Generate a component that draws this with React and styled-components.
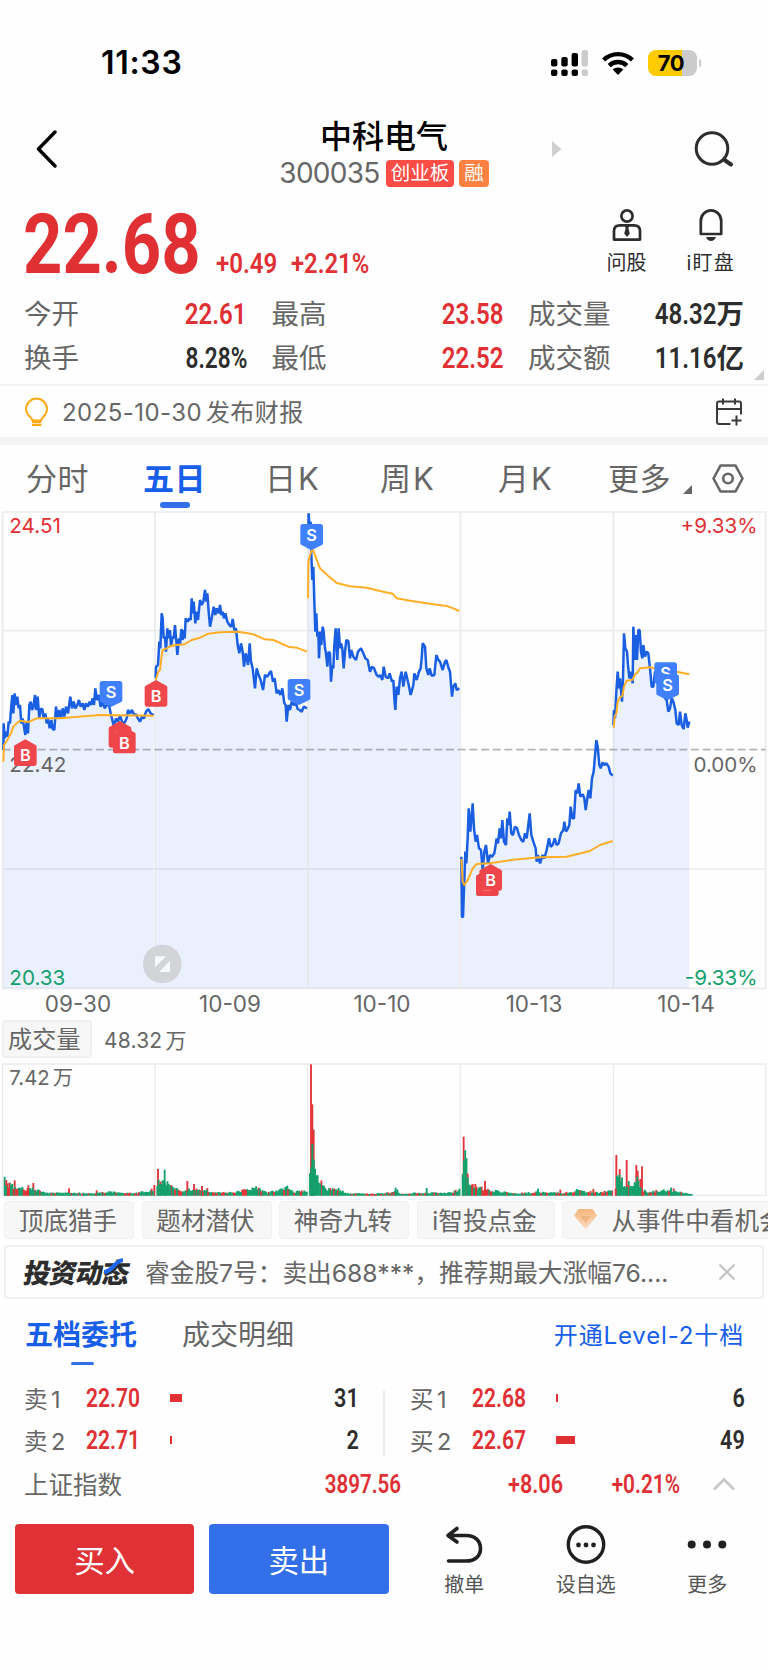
import React from "react";
import styled, { createGlobalStyle } from "styled-components";

const GlobalStyle = createGlobalStyle`
  * {
    box-sizing: border-box;
  }
  body {
    margin: 0;
    background: #fefefe;
  }
`;

const red = "#e03034";
const green = "#14a06c";
const blue = "#175ee9";
const grey = "#666";
const dark = "#2d2d2d";

const Screen = styled.div`
  width: 768px;
  height: 1670px;
  overflow: hidden;
  background: #fefefe;
  color: ${dark};
  font-family: "Inter", "Noto Sans CJK SC", sans-serif;
  white-space: nowrap;
`;

// Condensed figures for every price and amount
const Num = styled.span`
  display: inline-block;
  font-family: "Roboto", sans-serif;
  font-size: ${(p) => p.$size || 29}px;
  font-weight: ${(p) => p.$weight || 600};
  line-height: 1;
  color: ${(p) => p.$color || red};
  transform: scaleX(${(p) => p.$scale || 0.83});
  transform-origin: ${(p) => p.$origin || "right"} center;
`;

/* Status bar */

const StatusBar = styled.div`
  display: flex;
  align-items: center;
  height: 100px;
  padding: 25px 71px 0 101px;
`;

const Clock = styled.span`
  flex: 1;
  font-size: 32px;
  font-weight: 600;
  letter-spacing: 0.7px;
  color: #000;
`;

const Battery = styled.div`
  display: flex;
  align-items: center;
  justify-content: center;
  position: relative;
  width: 49px;
  height: 26px;
  margin-left: 14px;
  padding-right: 3px;
  border-radius: 8px;
  background: linear-gradient(90deg, #fecb00 70%, #cbcbcb 70%);
  font-size: 22px;
  font-weight: 700;
  letter-spacing: -0.5px;
  color: #000;
  &::after {
    content: "";
    position: absolute;
    right: -4px;
    top: 9px;
    width: 2px;
    height: 8px;
    border-radius: 0 3px 3px 0;
    background: #cbcbcb;
  }
`;

/* Header */

const Header = styled.header`
  display: grid;
  grid-template-columns: 220px 1fr 220px;
  align-items: center;
  height: 98px;
`;

const BackSlot = styled.div`
  padding-left: 35px;
  line-height: 0;
`;

const RightSlot = styled.div`
  display: flex;
  align-items: center;
  justify-content: space-between;
  padding: 0 34px 0 4px;
`;

const TitleBlock = styled.div`
  display: flex;
  flex-direction: column;
  align-items: center;
  gap: 1px;
  padding-top: 7px;
`;

const Title = styled.h1`
  margin: 0;
  font-size: 32px;
  font-weight: 500;
  line-height: 40px;
  color: #000;
`;

const CodeLine = styled.div`
  display: flex;
  align-items: center;
  gap: 5px;
  height: 30px;
  font-size: 28px;
  letter-spacing: -0.7px;
  color: ${grey};
`;

const Badge = styled.span`
  height: 27px;
  padding: 0 5px;
  border-radius: 4px;
  background: ${(p) => p.$bg};
  color: #fff;
  font-size: 19.5px;
  line-height: 26px;
  letter-spacing: 0;
  &:first-of-type {
    margin-left: 1px;
  }
`;

/* Quote */

const Quote = styled.section`
  position: relative;
  height: 186px;
  padding: 5px 24px 0;
`;

const PriceRow = styled.div`
  display: flex;
  align-items: baseline;
  height: 89px;
`;

const Price = styled.div`
  width: 193px;
  margin-left: -1px;
`;

const Change = styled.div`
  width: ${(p) => p.$w}px;
`;

const QuickActions = styled.div`
  display: flex;
  align-self: flex-start;
  gap: 40px;
  margin-left: auto;
  padding: 5px 9px 0 0;
`;

const QuickAction = styled.div`
  display: flex;
  flex-direction: column;
  align-items: center;
  gap: 8px;
  font-size: 20px;
  line-height: 26px;
  letter-spacing: ${(p) => (p.$wide ? 1.2 : 0)}px;
`;

const Stats = styled.div`
  display: grid;
  grid-template-columns: 223px 232px 216px;
  column-gap: 24.5px;
  grid-auto-rows: 44px;
`;

const Stat = styled.div`
  display: flex;
  align-items: center;
  justify-content: space-between;
  font-size: 27.5px;
  line-height: 44px;
  color: ${grey};
`;

const Unit = styled.span`
  color: ${dark};
  font-weight: 600;
`;

const StatValue = styled.span`
  display: flex;
  align-items: center;
`;

const Corner = styled.i`
  position: ${(p) => (p.$pinned ? "absolute" : "static")};
  right: 4px;
  bottom: 4px;
  justify-self: start;
  margin-top: ${(p) => (p.$pinned ? 0 : 20)}px;
  border-left: ${(p) => p.$size}px solid transparent;
  border-bottom: ${(p) => p.$size}px solid ${(p) => p.$color};
`;

const Notice = styled.div`
  display: flex;
  align-items: center;
  gap: 12px;
  height: 61px;
  padding: 0 25px 0 24px;
  border-top: 2px solid #f5f5f5;
  border-bottom: 8px solid #f4f4f4;
  color: ${grey};
  font-size: 24px;
  svg:last-child {
    margin-left: auto;
  }
`;

const NoticeText = styled.span`
  letter-spacing: 0.45px;
  word-spacing: -3.5px;
  padding-bottom: 2px;
`;

/* Period tabs */

const Periods = styled.nav`
  display: grid;
  grid-template-columns: 117px 122px 115px 118px 110px 75px 28px 34px;
  align-items: center;
  height: 66px;
  padding: 2px 0 0 26px;
  font-size: 31px;
`;

const Period = styled.span`
  position: relative;
  justify-self: start;
  color: ${(p) => (p.$active ? blue : grey)};
  font-weight: ${(p) => (p.$active ? 600 : 400)};
  line-height: 64px;
  letter-spacing: ${(p) => (p.$latin ? 2 : 0.5)}px;
  &::after {
    content: "";
    display: ${(p) => (p.$active ? "block" : "none")};
    position: absolute;
    left: 17px;
    bottom: 3px;
    width: 30px;
    height: 6px;
    border-radius: 3px;
    background: #326fe8;
  }
`;

/* Charts */

const ChartSvg = styled.svg`
  display: block;
  width: 768px;
  height: ${(p) => p.$h}px;
  font-family: "Inter", "Noto Sans CJK SC", sans-serif;
`;

const Dates = styled.div`
  display: grid;
  grid-template-columns: repeat(5, 1fr);
  height: 29px;
  padding: 0 6px 0 2px;
  font-size: 22.5px;
  line-height: 25px;
  color: ${grey};
  text-align: center;
`;

const VolumeHead = styled.div`
  display: flex;
  align-items: center;
  gap: 12px;
  height: 38px;
  margin: 0 0 5px 2px;
  color: ${grey};
  font-size: 21px;
  letter-spacing: 0.2px;
  word-spacing: -3px;
`;

const VolumeTag = styled.span`
  height: 38px;
  width: 90px;
  padding-left: 4px;
  border: 2px solid #f0f0f0;
  border-radius: 4px;
  background: #f7f7f7;
  font-size: 24px;
  line-height: 35px;
`;

/* Strategy chips and the news strip */

const Chips = styled.div`
  display: flex;
  gap: 7.5px;
  margin: 5px 0 6px 4px;
`;

const Chip = styled.span`
  display: flex;
  flex: none;
  align-items: center;
  justify-content: center;
  gap: 14px;
  width: ${(p) => p.$w}px;
  height: 38px;
  padding: 0 2px 2px 0;
  border: 1px solid #f0f0f0;
  border-radius: 4px;
  background: #f7f7f7;
  color: ${grey};
  font-size: 24.6px;
`;

const News = styled.div`
  display: flex;
  align-items: center;
  height: 54px;
  margin: 0 4px;
  padding: 0 26px 0 18px;
  border: 2px solid #f0f0f0;
  border-radius: 4px;
`;

const NewsLogo = styled.span`
  position: relative;
  width: 121px;
  padding-bottom: 2px;
  font-family: "Noto Sans CJK SC", sans-serif;
  font-size: 27px;
  font-weight: 900;
  letter-spacing: -0.8px;
  transform: skewX(-10deg);
  svg {
    position: absolute;
    left: 78px;
    top: 6px;
    transform: skewX(10deg);
  }
`;

const NewsText = styled.span`
  flex: 1;
  padding-bottom: 3px;
  color: ${grey};
  font-size: 24.7px;
`;

/* Order book */

const BookTabs = styled.div`
  display: flex;
  align-items: center;
  gap: 45px;
  height: 72px;
  padding: 0 24px 4px 25px;
  font-size: 28px;
  color: ${grey};
`;

const BookTab = styled.span`
  position: relative;
  color: ${(p) => (p.$active ? blue : grey)};
  font-weight: ${(p) => (p.$active ? 600 : 400)};
  &::after {
    content: "";
    display: ${(p) => (p.$active ? "block" : "none")};
    position: absolute;
    left: 46px;
    bottom: -12px;
    width: 23px;
    height: 3px;
    border-radius: 2px;
    background: #326fe8;
  }
`;

const LevelLink = styled.a`
  margin-left: auto;
  color: ${blue};
  font-size: 24px;
  letter-spacing: 0.85px;
`;

const Book = styled.div`
  display: grid;
  grid-template-columns: 335px 335px;
  column-gap: 51px;
  padding: 6px 0 0 24px;
  background: linear-gradient(#ececec, #ececec) 383px 19px / 2px 66px no-repeat;
`;

const BookRow = styled.div`
  display: grid;
  grid-template-columns: 62px 84px 1fr auto;
  align-items: center;
  height: 42px;
  color: ${grey};
  font-size: 23.5px;
  word-spacing: -3px;
`;

const Depth = styled.i`
  height: 8px;
  background: ${red};
`;

const IndexRow = styled.div`
  display: grid;
  grid-template-columns: 176px 201px 162px 117px 1fr;
  align-items: center;
  height: 45px;
  padding: 0 32px 0 24px;
  color: ${grey};
  font-size: 24.5px;
  text-align: right;
  > :first-child {
    text-align: left;
  }
  svg {
    justify-self: end;
  }
`;

/* Bottom bar */

const BottomBar = styled.footer`
  display: flex;
  gap: 15px;
  padding: 17.5px 0 0 15px;
`;

const TradeButton = styled.button`
  width: 180px;
  height: 70px;
  border: 0;
  border-radius: 4px;
  background: ${(p) => p.$bg};
  color: #fff;
  font: 400 30.5px "Noto Sans CJK SC", sans-serif;
`;

const Tools = styled.div`
  display: grid;
  grid-template-columns: repeat(3, 121.5px);
`;

const Tool = styled.div`
  display: flex;
  flex-direction: column;
  align-items: center;
  gap: 6px;
  color: #555;
  font-size: 20px;
  line-height: 26px;
`;

// Plot points are in thirds of a pixel
const days = [
  {
    x: 0,
    price:
      "10,735 11,655 14,700 18,680 22,695 26,650 30,655 34,600 37,570 40,625 44,565 48,600 52,575 56,610 60,600 64,655 68,640 72,665 76,690 80,650 84,685 88,600 92,590 96,615 100,605 105,570 108,615 113,575 118,640 122,612 127,612 131,640 136,625 140,655 144,640 149,670 154,645 158,672 163,675 168,605 173,640 178,615 183,640 188,610 193,635 198,605 204,625 211,575 216,610 221,590 226,610 232,600 237,585 242,605 248,595 253,615 258,595 264,605 269,590 273,600 278,580 282,600 286,550 291,585 296,570 302,605 308,590 314,610 320,600 327,600 332,625 337,645 342,665 348,640 354,650 360,630 366,650 373,655 380,640 384,615 390,625 396,615 402,630 408,628 414,640 420,650 426,635 432,640 438,620 445,612 452,625 461,630",
    avg: "10,770 12,720 22,705 33,685 40,665 50,655 60,647 85,651 110,640 180,640 300,630 461,632",
  },
  {
    x: 0,
    price:
      "467,520 468,485 474,480 478,410 481,430 485,325 488,340 491,400 495,395 498,440 502,370 506,400 510,375 513,425 518,395 521,400 525,360 529,410 532,450 537,400 540,420 544,372 548,405 551,375 554,400 557,340 563,350 568,340 572,345 575,280 578,325 581,290 586,355 590,320 594,345 600,285 605,300 610,290 615,255 619,290 622,265 626,320 630,365 636,335 641,305 646,330 650,310 656,325 660,300 664,330 668,320 672,340 676,325 682,350 688,360 694,365 698,342 703,375 708,370 713,420 718,445 723,415 728,440 732,485 737,445 744,480 749,415 753,470 758,490 765,550 770,490 776,510 782,525 789,555 795,510 802,515 808,505 813,498 819,530 824,520 830,565 835,555 841,570 847,550 853,595 857,600 860,650 865,600 870,615 875,590 882,600 888,595 893,612 899,615 905,620 911,605 921,610",
    avg: "467,525 475,500 480,495 484,460 488,435 500,430 515,422 530,420 553,418 575,405 600,398 625,386 660,382 715,380 760,388 795,403 820,405 865,425 890,428 921,440",
  },
  {
    x: 900,
    price:
      "24,130 26,25 28,60 32,50 34,150 37,225 40,185 43,290 46,380 49,325 52,395 55,380 57,460 61,380 64,420 68,365 71,380 75,430 78,445 82,485 86,440 90,445 93,530 97,480 100,490 103,420 107,370 112,465 116,370 120,430 123,415 127,430 131,490 135,440 139,405 145,408 150,460 154,435 160,455 168,465 174,440 183,430 190,445 196,460 203,465 210,500 216,485 222,490 230,510 236,515 240,510 247,525 251,485 257,515 264,520 269,505 276,530 280,525 283,580 286,615 290,545 295,570 300,520 305,500 310,545 317,500 325,535 332,570 340,540 343,505 350,525 357,500 362,490 365,460 368,415 375,425 379,490 385,510 389,490 395,512 403,510 409,450 415,465 420,470 428,495 435,470 439,465 446,490 450,500 456,575 460,545 466,535 470,555 478,550",
    avg: "24,280 25,170 30,150 37,130 43,145 60,190 85,213 110,234 150,244 200,248 240,258 278,266 290,280 330,287 400,298 440,303 460,310 478,318",
  },
  {
    x: 900,
    price:
      "484,1055 486,1235 489,1237 492,1150 496,1040 499,1075 503,1000 506,910 511,980 518,895 522,970 527,1010 531,990 537,1030 543,1035 548,1095 553,1040 558,1020 564,1075 570,1050 576,1055 583,1045 590,1000 594,1015 599,970 603,1000 607,945 612,1010 618,1020 622,940 626,960 629,920 634,985 639,990 645,965 651,970 657,990 664,1005 670,1010 675,985 680,1000 685,960 689,925 694,990 700,1010 707,1030 710,1070 714,1050 720,1075 728,1050 733,1060 740,1035 747,1000 752,1025 758,1020 764,1000 770,1020 776,1015 783,985 790,975 793,950 798,980 804,970 808,960 812,905 817,940 822,940 827,855 832,865 836,835 841,875 848,868 853,880 857,915 862,880 866,855 871,880 876,820 881,800 886,740 889,705 893,725 898,780 902,790 908,772 913,780 919,775 926,785 931,805 938,812",
    avg: "484,1062 488,1130 493,1140 500,1130 508,1115 518,1090 530,1077 570,1075 640,1064 720,1057 800,1055 830,1048 870,1038 900,1020 938,1008",
  },
  {
    x: 1590,
    price:
      "250,660 252,615 255,640 259,560 263,500 267,550 270,520 276,590 279,520 282,385 286,430 291,440 294,480 298,520 303,500 308,535 310,365 314,465 317,390 321,465 325,375 329,375 333,440 337,460 340,420 345,455 350,440 355,445 360,490 365,545 370,545 375,500 385,540 395,530 405,580 410,585 415,620 420,610 425,580 430,590 436,615 440,655 446,660 450,620 455,660 461,672 466,625 470,645 473,668 478,650",
    avg: "251,668 254,635 259,625 263,590 270,577 277,573 282,545 290,527 308,524 315,508 322,503 330,490 360,487 400,495 440,500 478,508",
  },
];

const marks = [
  ["B", 76, 703],
  ["S", 333, 606],
  ["B", 360, 648],
  ["B", 373, 665],
  ["B", 468, 525],
  ["S", 897, 600],
  ["S", 935, 135],
  ["B", 1462, 1093],
  ["B", 1472, 1077],
  ["S", 1997, 550],
  ["S", 2003, 586],
];

const gridX = [465, 923, 1381, 1840];

function areaPath(points) {
  const first = points.split(",")[0];
  const last = points.split(" ").pop().split(",")[0];
  return `M${first},1450 L${points.split(" ").join(" L")} L${last},1450 Z`;
}

// S pins point down at their tip, B pins point up
function Mark({ kind, x, y }) {
  const down = kind === "S";
  return (
    <g transform={`translate(${x} ${y})`}>
      <path
        d={
          down
            ? "M0,0 L-32,-16 Q-34,-17 -34,-21 V-70 Q-34,-78 -26,-78 H26 Q34,-78 34,-70 V-21 Q34,-17 32,-16 Z"
            : "M0,0 L32,18 Q34,19 34,23 V72 Q34,80 26,80 H-26 Q-34,80 -34,72 V23 Q-34,19 -32,18 Z"
        }
        fill={down ? "#4080fc" : "#ee464b"}
      />
      <text
        x="0"
        y={down ? -27 : 66}
        textAnchor="middle"
        fontSize="49"
        fontWeight="600"
        fill="#fff"
      >
        {kind}
      </text>
    </g>
  );
}

function PriceChart() {
  return (
    <ChartSvg $h={480} viewBox="0 18 2304 1440">
      <g stroke="#ebebeb" strokeWidth="5" fill="none">
        <path d="M8,21 H2297 V1450 H8 Z M8,377 H2297 M8,1092 H2297" />
        {gridX.map((x) => (
          <path key={x} d={`M${x},21 V1450`} />
        ))}
      </g>
      <path
        d="M8,734 H2297"
        stroke="#b5b5b5"
        strokeWidth="5"
        strokeDasharray="24 11"
      />
      {days.map((day, i) => (
        <g key={i} transform={`translate(${day.x} 0)`} fill="none">
          <path d={areaPath(day.price)} fill="#3a72ff" fillOpacity="0.1" />
          <polyline
            points={day.price}
            stroke="#1a5fe2"
            strokeWidth="7.5"
            strokeLinejoin="bevel"
          />
          <polyline
            points={day.avg}
            stroke="#ffae26"
            strokeWidth="6"
            strokeLinejoin="round"
          />
        </g>
      ))}
      <g fontSize="62" fill={grey}>
        <text x="28" y="84" fill={red}>24.51</text>
        <text x="28" y="800">22.42</text>
        <text x="28" y="1440" fill={green}>20.33</text>
        <g textAnchor="end">
          <text x="2273" y="84" fill={red}>+9.33%</text>
          <text x="2273" y="800">0.00%</text>
          <text x="2273" y="1440" fill={green}>-9.33%</text>
        </g>
      </g>
      {marks.map(([kind, x, y]) => (
        <Mark key={`${x}-${y}`} kind={kind} x={x} y={y} />
      ))}
      <circle cx="487" cy="1377" r="58" fill="#d3d4d7" />
      <path d="M465,1354 H498 L465,1387 Z M510,1367 V1401 H477 Z" fill="#f7f8fb" />
    </ChartSvg>
  );
}

// Envelope of each day as [x, height]
const volumeShape = [
  [[14, 50], [22, 36], [45, 26], [80, 22], [115, 20], [135, 8], [200, 9], [260, 8], [330, 11], [400, 7], [440, 14], [462, 20]],
  [[472, 40], [490, 50], [508, 36], [530, 20], [550, 14], [575, 20], [610, 18], [650, 10], [700, 10], [770, 24], [800, 10], [860, 24], [880, 12], [922, 16]],
  [[930, 70], [937, 150], [942, 100], [952, 74], [962, 42], [975, 22], [1010, 20], [1040, 8], [1100, 6], [1170, 9], [1190, 20], [1200, 6], [1280, 10], [1340, 8], [1379, 18]],
  [[1388, 75], [1394, 138], [1399, 100], [1405, 50], [1415, 34], [1440, 26], [1460, 18], [1500, 13], [1550, 7], [1620, 12], [1690, 8], [1730, 16], [1800, 10], [1838, 16]],
  [[1847, 30], [1852, 60], [1862, 56], [1870, 36], [1882, 28], [1895, 30], [1912, 50], [1925, 20], [1945, 12], [1975, 16], [2010, 16], [2050, 9], [2076, 3]],
];

const volumeSpikes = [
  [19, 47], [28, 38], [44, 46], [85, 31], [100, 38], [207, 22], [290, 16], [463, 32],
  [474, 80], [481, 42], [494, 78, 1], [562, 44], [582, 35], [606, 29], [622, 23], [862, 30, 1],
  [933, 394], [937, 274], [941, 198], [937, 155, 1], [1016, 23, 1], [1187, 24, 1], [1280, 23, 1],
  [1391, 177], [1403, 66], [1455, 44], [1614, 21, 1], [1681, 18], [1730, 20, 1], [1780, 20],
  [1849, 122], [1859, 80], [1880, 107], [1886, 44, 1], [1909, 92], [1913, 75], [1926, 88], [1921, 50], [1912, 57, 1], [2013, 24, 1], [2021, 22],
];

function buildBars() {
  const bars = volumeSpikes.map(([x, h, down]) => ({ x, h, up: !down }));
  let seed = 11;
  volumeShape.forEach((shape) => {
    const end = shape[shape.length - 1][0];
    let k = 0;
    for (let x = shape[0][0]; x <= end; x += 3.8) {
      while (k < shape.length - 2 && x > shape[k + 1][0]) k += 1;
      const [x0, h0] = shape[k];
      const [x1, h1] = shape[k + 1];
      const base = h0 + ((h1 - h0) * (x - x0)) / (x1 - x0);
      seed = (seed * 16807) % 2147483647;
      const r = (seed % 1000) / 1000;
      const up = (seed >> 5) % 10 < 3 && base < 40;
      bars.push({ x, h: Math.max(5, base * (0.65 + r * 0.55)), up });
    }
  });
  // tall bars go first so the short ones stay visible in front
  return bars.sort((a, b) => b.h - a.h);
}

const bars = buildBars();

function VolumeChart() {
  return (
    <ChartSvg $h={133} viewBox="0 399 2304 399">
      <g stroke="#ebebeb" strokeWidth="4" fill="none">
        <path d="M8,402 H2297 V796 H8 Z" />
        {gridX.map((x) => (
          <path key={x} d={`M${x},402 V796`} />
        ))}
      </g>
      {bars.map((bar, i) => (
        <rect
          key={i}
          x={bar.x - 2.8}
          y={797 - bar.h}
          width="5.6"
          height={bar.h}
          fill={bar.up ? "#e1353a" : green}
        />
      ))}
      <text x="28" y="465" fontSize="61" fill={grey} wordSpacing="-8">
        7.42 万
      </text>
    </ChartSvg>
  );
}

/* Icons */

const SignalIcon = () => (
  <svg width="38" height="26" viewBox="0 0 38 26">
    <g fill="#000">
      <rect x="0" y="9" width="6.4" height="7.5" rx="2" />
      <rect x="10.3" y="7" width="6.4" height="9.5" rx="2" />
      <rect x="20.6" y="3" width="6.4" height="13.5" rx="2" />
      <rect x="0" y="19.5" width="6.4" height="6.5" rx="2" />
      <rect x="10.3" y="19.5" width="6.4" height="6.5" rx="2" />
      <rect x="20.6" y="19.5" width="6.4" height="6.5" rx="2" />
    </g>
    <g fill="#cbcbcb">
      <rect x="30.6" y="0" width="6.4" height="16.5" rx="2" />
      <rect x="30.6" y="19.5" width="6.4" height="6.5" rx="2" />
    </g>
  </svg>
);

const WifiSvg = styled.svg`
  margin-left: 13px;
`;

const WifiIcon = () => (
  <WifiSvg width="32" height="24" viewBox="0 0 32 24">
    <g fill="none" stroke="#000" strokeWidth="4.4">
      <path d="M1.6,9 A20.5,20.5 0 0 1 30.4,9" />
      <path d="M7.2,14.6 A12.6,12.6 0 0 1 24.8,14.6" />
    </g>
    <path d="M16,24 L10.7,18.6 A7.6,7.6 0 0 1 21.3,18.6 Z" fill="#000" />
  </WifiSvg>
);

const BackIcon = () => (
  <svg width="22" height="38" viewBox="0 0 22 38" fill="none">
    <path d="M20,2 L3.5,19 L20,36" stroke="#000" strokeWidth="3.4" strokeLinecap="round" strokeLinejoin="round" />
  </svg>
);

const SearchIcon = () => (
  <svg width="40" height="38" viewBox="0 0 40 38" fill="none" stroke={dark} strokeWidth="3">
    <circle cx="18" cy="18.5" r="15.8" />
    <path d="M30.5,30 L37,34.5" strokeWidth="4" strokeLinecap="round" />
  </svg>
);

const AdvisorIcon = () => (
  <svg width="30" height="34" viewBox="0 0 30 34" fill="none" stroke={dark} strokeWidth="2.7">
    <circle cx="15" cy="8" r="5.6" />
    <path d="M2,31.6 V23 Q2,17.3 8,17.3 H22 Q28,17.3 28,23 V31.6 Z" strokeLinejoin="round" />
    <path d="M13,18 H17 L16.4,20.5 L17.8,25.5 L15,29 L12.2,25.5 L13.6,20.5 Z" fill={dark} stroke="none" />
  </svg>
);

const BellIcon = () => (
  <svg width="26" height="34" viewBox="0 0 26 34" fill="none" stroke={dark} strokeWidth="2.7">
    <path d="M2.8,26 V13 A10.2,10.6 0 0 1 23.2,13 V26 Z" strokeLinejoin="round" />
    <path d="M8,29 H18 Q16.5,33 13,33 Q9.5,33 8,29 Z" fill={dark} stroke="none" />
  </svg>
);

const BulbIcon = () => (
  <svg width="26" height="30" viewBox="0 0 26 30" fill="none" stroke="#ffa914" strokeWidth="2">
    <path d="M8.5,23.5 C8.5,20.5 2,18.5 2,12.2 A10.5,10.6 0 0 1 23,12.2 C23,18.5 17,20.5 17,23.5 Z" strokeLinejoin="round" />
    <path d="M8,27.8 H17.4 M8,25 H17.4" strokeWidth="2.2" />
  </svg>
);

const CalendarIcon = () => (
  <svg width="28" height="28" viewBox="0 0 28 28" fill="none" stroke="#3b3b3b" strokeWidth="2">
    <path d="M15.5,26 H4 Q2,26 2,24 V5.5 Q2,3.5 4,3.5 H24 Q26,3.5 26,5.5 V16.5 M2,11 H26 M8,0.5 V6.5 M20,0.5 V6.5 M21.5,17.5 V27.5 M16.5,22.5 H26.5" />
  </svg>
);

const HexIcon = () => (
  <svg width="34" height="32" viewBox="0 0 34 32" fill="none" stroke={grey} strokeWidth="2.6">
    <path d="M9.5,2.5 H24.5 L31.5,15.5 L24.5,28.5 H9.5 L2.5,15.5 Z" strokeLinejoin="round" />
    <circle cx="17" cy="15.5" r="4.8" />
  </svg>
);

const GemIcon = () => (
  <svg width="23" height="20" viewBox="0 0 23 20">
    <defs>
      <linearGradient id="gem" x1="0" y1="0" x2="0" y2="1">
        <stop offset="0" stopColor="#f5b67d" />
        <stop offset="1" stopColor="#fbdcc0" />
      </linearGradient>
    </defs>
    <path d="M4.5,0 H18.5 L23,6.5 L12.5,19.3 Q11.5,20 10.5,19.3 L0,6.5 Z" fill="url(#gem)" />
    <path d="M6,7 H17 L11.5,14 Z" fill="#e3a56d" fillOpacity="0.55" />
  </svg>
);

const CloseIcon = () => (
  <svg width="18" height="18" viewBox="0 0 18 18" stroke="#c6c6c6" strokeWidth="2.4">
    <path d="M1.5,1.5 L16.5,16.5 M16.5,1.5 L1.5,16.5" />
  </svg>
);

const ChevronUp = () => (
  <svg width="24" height="14" viewBox="0 0 24 14" fill="none" stroke="#c8c8c8" strokeWidth="2.8">
    <path d="M2,12.5 L12,2.5 L22,12.5" />
  </svg>
);

const UndoIcon = () => (
  <svg width="40" height="42" viewBox="0 0 40 42" fill="none" stroke="#202020" strokeWidth="3.6" strokeLinecap="round" strokeLinejoin="round">
    <path d="M13,4.5 L4,11.5 L13,18 M4.5,11.5 H22 C31,11.5 36.5,17 36.5,24.5 C36.5,32 31,37 22,37 H4.5" />
  </svg>
);

const WatchIcon = () => (
  <svg width="42" height="42" viewBox="0 0 42 42">
    <circle cx="21" cy="20.5" r="17.7" fill="none" stroke="#202020" strokeWidth="3.4" />
    <g fill="#202020">
      <circle cx="13.5" cy="21" r="2.4" />
      <circle cx="21" cy="21" r="2.4" />
      <circle cx="28.5" cy="21" r="2.4" />
    </g>
  </svg>
);

const MoreIcon = () => (
  <svg width="42" height="42" viewBox="0 0 42 42" fill="#202020">
    <circle cx="5.7" cy="20.5" r="4" />
    <circle cx="21" cy="20.5" r="4" />
    <circle cx="36.3" cy="20.5" r="4" />
  </svg>
);

const stats = [
  ["今开", "22.61", red],
  ["最高", "23.58", red],
  ["成交量", "48.32", dark, "万"],
  ["换手", "8.28%", dark],
  ["最低", "22.52", red],
  ["成交额", "11.16", dark, "亿"],
];

const book = [
  ["卖 1", "22.70", 12, "31"],
  ["买 1", "22.68", 2, "6"],
  ["卖 2", "22.71", 2, "2"],
  ["买 2", "22.67", 19, "49"],
];

export default function App() {
  return (
    <Screen>
      <GlobalStyle />
      <StatusBar>
        <Clock>11:33</Clock>
        <SignalIcon />
        <WifiIcon />
        <Battery>70</Battery>
      </StatusBar>

      <Header>
        <BackSlot>
          <BackIcon />
        </BackSlot>
        <TitleBlock>
          <Title>中科电气</Title>
          <CodeLine>
            300035
            <Badge $bg="#fb4c46">创业板</Badge>
            <Badge $bg="#ff8142">融</Badge>
          </CodeLine>
        </TitleBlock>
        <RightSlot>
          <svg width="10" height="16" viewBox="0 0 10 16">
            <path d="M0,0 L9.5,8 L0,16 Z" fill="#cfcfcf" />
          </svg>
          <SearchIcon />
        </RightSlot>
      </Header>

      <Quote>
        <PriceRow>
          <Price>
            <Num $size={83} $weight={700} $origin="left" $scale={0.828}>22.68</Num>
          </Price>
          <Change $w={75}>
            <Num $size={28} $origin="left" $scale={0.86}>+0.49</Num>
          </Change>
          <Change $w={90}>
            <Num $size={28} $origin="left" $scale={0.85}>+2.21%</Num>
          </Change>
          <QuickActions>
            <QuickAction>
              <AdvisorIcon />
              问股
            </QuickAction>
            <QuickAction $wide>
              <BellIcon />
              i盯盘
            </QuickAction>
          </QuickActions>
        </PriceRow>
        <Stats>
          {stats.map(([label, value, color, unit]) => (
            <Stat key={label}>
              {label}
              <StatValue>
                <Num $color={color} $scale={value.includes("%") ? 0.78 : 0.83}>
                  {value}
                </Num>
                {unit && <Unit>{unit}</Unit>}
              </StatValue>
            </Stat>
          ))}
        </Stats>
        <Corner $pinned $size={10} $color="#ccc" />
      </Quote>

      <Notice>
        <BulbIcon />
        <NoticeText>2025-10-30 发布财报</NoticeText>
        <CalendarIcon />
      </Notice>

      <Periods>
        <Period>分时</Period>
        <Period $active>五日</Period>
        <Period $latin>日K</Period>
        <Period $latin>周K</Period>
        <Period $latin>月K</Period>
        <Period>更多</Period>
        <Corner $size={9} $color={grey} />
        <HexIcon />
      </Periods>

      <PriceChart />
      <Dates>
        <span>09-30</span>
        <span>10-09</span>
        <span>10-10</span>
        <span>10-13</span>
        <span>10-14</span>
      </Dates>

      <VolumeHead>
        <VolumeTag>成交量</VolumeTag>
        48.32 万
      </VolumeHead>
      <VolumeChart />

      <Chips>
        <Chip $w={130}>顶底猎手</Chip>
        <Chip $w={130}>题材潜伏</Chip>
        <Chip $w={130}>神奇九转</Chip>
        <Chip $w={138}>i智投点金</Chip>
        <Chip $w={236}>
          <GemIcon />
          从事件中看机会
        </Chip>
      </Chips>

      <News>
        <NewsLogo>
          投资动态
          <svg width="22" height="18" viewBox="0 0 22 18">
            <path d="M1,14 C10,14 11,3 20,2" stroke="#1f66f0" strokeWidth="4" fill="none" />
          </svg>
        </NewsLogo>
        <NewsText>睿金股7号：卖出688***，推荐期最大涨幅76....</NewsText>
        <CloseIcon />
      </News>

      <BookTabs>
        <BookTab $active>五档委托</BookTab>
        <BookTab>成交明细</BookTab>
        <LevelLink>开通Level-2十档</LevelLink>
      </BookTabs>

      <Book>
        {book.map(([label, price, depth, amount]) => (
          <BookRow key={label}>
            {label}
            <Num $size={26} $origin="left" $scale={0.81}>{price}</Num>
            <Depth style={{ width: depth }} />
            <Num $size={26} $color={dark} $scale={0.83}>{amount}</Num>
          </BookRow>
        ))}
      </Book>

      <IndexRow>
        <span>上证指数</span>
        <Num $size={26} $scale={0.79}>3897.56</Num>
        <Num $size={26} $scale={0.83}>+8.06</Num>
        <Num $size={26} $scale={0.8}>+0.21%</Num>
        <ChevronUp />
      </IndexRow>

      <BottomBar>
        <TradeButton $bg="#e03136">买入</TradeButton>
        <TradeButton $bg="#336fe8">卖出</TradeButton>
        <Tools>
          <Tool>
            <UndoIcon />
            撤单
          </Tool>
          <Tool>
            <WatchIcon />
            设自选
          </Tool>
          <Tool>
            <MoreIcon />
            更多
          </Tool>
        </Tools>
      </BottomBar>
    </Screen>
  );
}
